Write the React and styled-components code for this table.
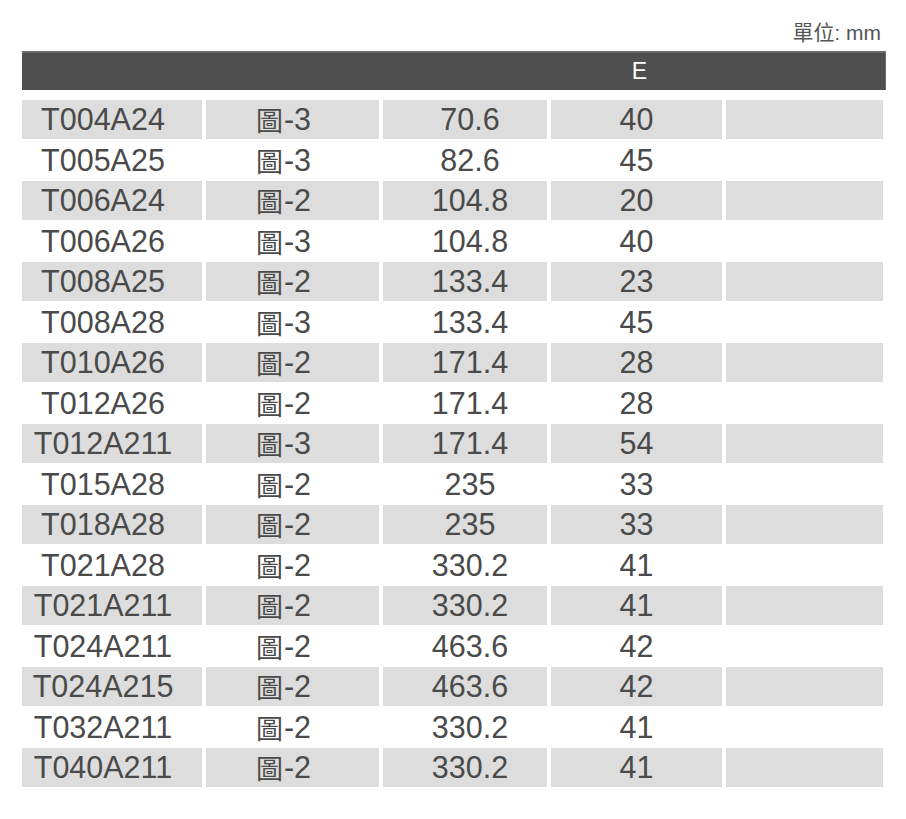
import React from 'react';
import styled, { createGlobalStyle } from 'styled-components';

const GlobalStyle = createGlobalStyle`
  body {
    margin: 0;
    background: #fff;
    font-family: "Liberation Sans", "Noto Sans CJK TC", sans-serif;
  }
`

const rows = [
  ['T004A24', '3', '70.6', '40'],
  ['T005A25', '3', '82.6', '45'],
  ['T006A24', '2', '104.8', '20'],
  ['T006A26', '3', '104.8', '40'],
  ['T008A25', '2', '133.4', '23'],
  ['T008A28', '3', '133.4', '45'],
  ['T010A26', '2', '171.4', '28'],
  ['T012A26', '2', '171.4', '28'],
  ['T012A211', '3', '171.4', '54'],
  ['T015A28', '2', '235', '33'],
  ['T018A28', '2', '235', '33'],
  ['T021A28', '2', '330.2', '41'],
  ['T021A211', '2', '330.2', '41'],
  ['T024A211', '2', '463.6', '42'],
  ['T024A215', '2', '463.6', '42'],
  ['T032A211', '2', '330.2', '41'],
  ['T040A211', '2', '330.2', '41'],
]

function App() {
  return (
    <>
      <GlobalStyle />
      <Page>
        <Unit><Cjk>單位</Cjk>: <Mm>mm</Mm></Unit>
        <HeaderBar>
          <HeaderCell />
          <HeaderCell />
          <HeaderCell />
          <HeaderCell>E</HeaderCell>
          <HeaderCell />
        </HeaderBar>
        <Body>
          {rows.map((r, i) => (
            <Row key={r[0]} $shaded={i % 2 === 0}>
              <Cell $right={18}>{r[0]}</Cell>
              <Cell $right={18}><Fig>圖</Fig>-{r[1]}</Cell>
              <Cell $left={10}>{r[2]}</Cell>
              <Cell>{r[3]}</Cell>
              <Cell />
            </Row>
          ))}
        </Body>
      </Page>
    </>
  );
}

export default App;

// Styled Components

const cols = '180px 173px 164px 171px 157px'

let Page = styled.div`
    width: 906px;
    height: 819px;
    padding: 18px 0 0 22px;
    box-sizing: border-box;
`

let Unit = styled.div`
    width: 859px;
    height: 27px;
    display: flex;
    justify-content: flex-end;
    align-items: baseline;
    font-size: 20px;
    line-height: 27px;
    color: #555;
`

let Cjk = styled.span`
    font-family: "Noto Sans CJK TC", sans-serif;
    font-size: 21px;
`

let Mm = styled.span`
    font-size: 21px;
    margin-left: 6px;
`

let HeaderBar = styled.div`
    display: grid;
    grid-template-columns: ${cols};
    column-gap: 4px;
    width: 864px;
    height: 39px;
    margin-top: 6px;
    box-sizing: border-box;
    background-color: #4f4f4f;
    border-top: 2px solid #6b6b6b;
    border-right: 1px solid #6b6b6b;
`

let HeaderCell = styled.div`
    display: flex;
    align-items: center;
    justify-content: center;
    color: #fff;
    font-size: 23px;
    line-height: 1;
    padding-left: 6px;
`

let Body = styled.div`
    display: flex;
    flex-direction: column;
    gap: 1.5px;
    margin-top: 10px;
`

let Row = styled.div`
    display: grid;
    grid-template-columns: ${cols};
    column-gap: 4px;
    height: 39px;
    > div{
        background-color: ${p => p.$shaded ? '#dcdddc' : '#fff'};
    }
`

let Cell = styled.div`
    display: flex;
    align-items: center;
    justify-content: center;
    font-size: 30.5px;
    line-height: 1;
    color: #4a4a4a;
    padding-left: ${p => p.$left || 0}px;
    padding-right: ${p => p.$right || 0}px;
`

let Fig = styled.span`
    font-family: "Noto Sans CJK TC", sans-serif;
    font-size: 27px;
    line-height: 1;
    margin-right: 1px;
`
